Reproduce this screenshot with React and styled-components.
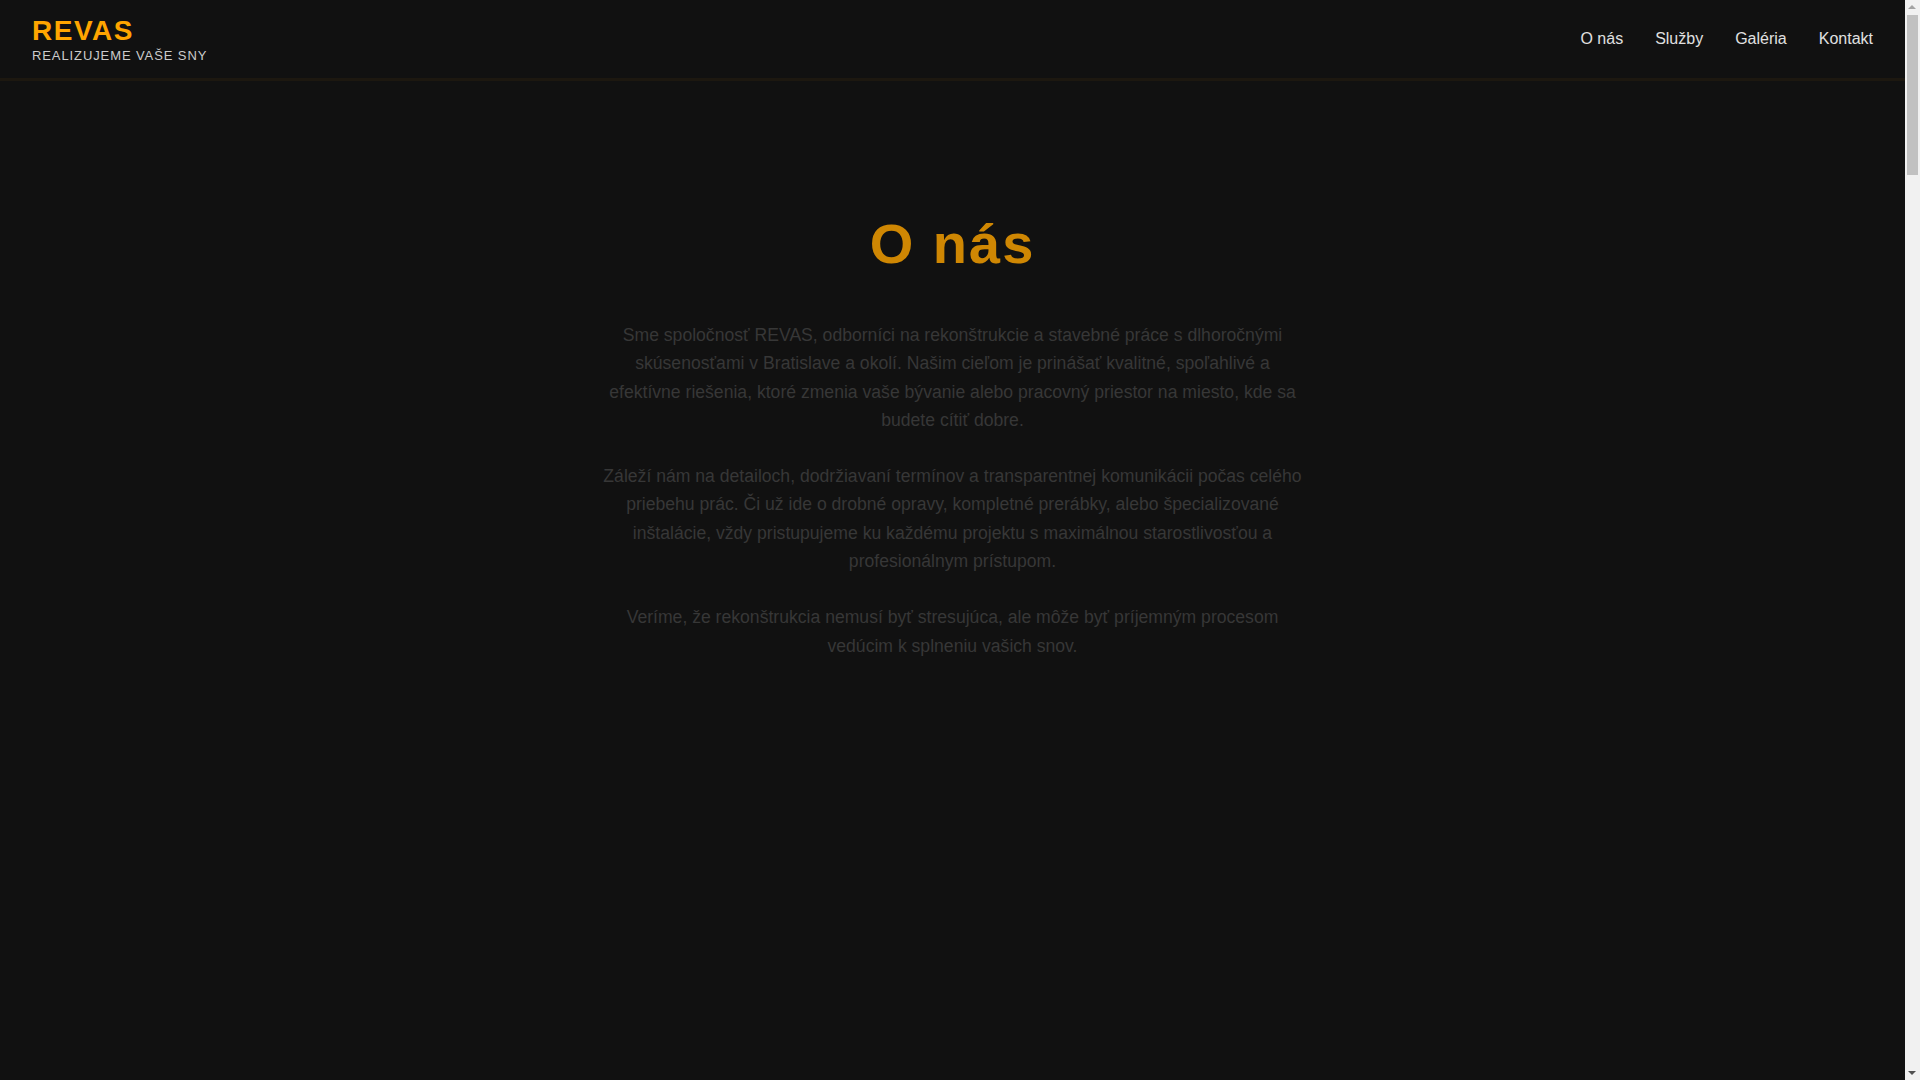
import React from 'react';
import styled, { createGlobalStyle } from 'styled-components';

const GlobalStyle = createGlobalStyle`
  html, body {
    margin: 0;
    padding: 0;
    background: #111111;
    color: #e0e0e0;
    font-family: "Liberation Sans", Arial, sans-serif;
  }
  * { box-sizing: border-box; }
`;

const Page = styled.div`
  margin-right: 15px;
`;

// classic browser scrollbar, drawn over the right edge
const ScrollTrack = styled.div`
  position: fixed;
  top: 0;
  right: 0;
  width: 15px;
  height: 100vh;
  background: #f1f1f1;
`;

const ScrollThumb = styled.div`
  position: absolute;
  top: 15px;
  left: 2px;
  width: 11px;
  height: 160px;
  background: #c1c1c1;
`;

const ScrollArrow = styled.div`
  position: absolute;
  left: 3px;
  width: 0;
  height: 0;
  border-left: 4.5px solid transparent;
  border-right: 4.5px solid transparent;
  ${({ $down }) =>
    $down
      ? 'bottom: 5px; border-top: 4px solid #505050;'
      : 'top: 5px; border-bottom: 4px solid #a3a3a3;'}
`;

const Header = styled.header`
  display: flex;
  justify-content: space-between;
  align-items: center;
  height: 81px;
  padding: 0 32px;
  background: #111111;
  border-bottom: 3px solid rgba(255, 165, 0, 0.05);
`;

const Brand = styled.div`
  display: flex;
  flex-direction: column;
`;

const Logo = styled.h1`
  margin: 0;
  font-size: 28px;
  line-height: 32px;
  font-weight: 700;
  letter-spacing: 1.5px;
  color: #ffa500;
`;

const Tagline = styled.span`
  font-size: 13px;
  line-height: 17px;
  letter-spacing: 0.9px;
  color: #cccccc;
`;

const Nav = styled.nav`
  display: flex;
  gap: 32px;
`;

const NavLink = styled.a`
  font-size: 16px;
  color: #e0e0e0;
  text-decoration: none;
`;

const Section = styled.section`
  display: flex;
  flex-direction: column;
  align-items: center;
  min-height: ${({ $tall }) => ($tall ? '1000px' : '1500px')};
  padding: 129px 20px 80px;
  opacity: ${({ $hidden }) => ($hidden ? 0 : 1)};
`;

const Title = styled.h2`
  margin: 0 0 44px;
  font-size: 56px;
  line-height: 67px;
  font-weight: 700;
  letter-spacing: 2px;
  color: #cf8703;
`;

const Text = styled.div`
  max-width: 700px;
  text-align: center;
`;

const Paragraph = styled.p`
  margin: 0 0 28px;
  font-size: 17.6px;
  line-height: 28.3px;
  color: #373737;
`;

const links = ['O nás', 'Služby', 'Galéria', 'Kontakt'];

const App = () => {
  return (
    <>
      <GlobalStyle />
      <Page>
        <Header>
          <Brand>
            <Logo>REVAS</Logo>
            <Tagline>REALIZUJEME VAŠE SNY</Tagline>
          </Brand>
          <Nav>
            {links.map((l) => (
              <NavLink key={l} href="#">{l}</NavLink>
            ))}
          </Nav>
        </Header>

        <Section $tall>
          <Title>O nás</Title>
          <Text>
            <Paragraph>
              Sme spoločnosť REVAS, odborníci na rekonštrukcie a stavebné práce s dlhoročnými
              skúsenosťami v Bratislave a okolí. Našim cieľom je prinášať kvalitné, spoľahlivé a
              efektívne riešenia, ktoré zmenia vaše bývanie alebo pracovný priestor na miesto, kde sa
              budete cítiť dobre.
            </Paragraph>
            <Paragraph>
              Záleží nám na detailoch, dodržiavaní termínov a transparentnej komunikácii počas celého
              priebehu prác. Či už ide o drobné opravy, kompletné prerábky, alebo špecializované
              inštalácie, vždy pristupujeme ku každému projektu s maximálnou starostlivosťou a
              profesionálnym prístupom.
            </Paragraph>
            <Paragraph>
              Veríme, že rekonštrukcia nemusí byť stresujúca, ale môže byť príjemným procesom
              vedúcim k splneniu vašich snov.
            </Paragraph>
          </Text>
        </Section>

        <Section $hidden>
          <Title>Služby</Title>
        </Section>
        <Section $hidden>
          <Title>Galéria</Title>
        </Section>
        <Section $hidden>
          <Title>Kontakt</Title>
        </Section>
      </Page>
      <ScrollTrack>
        <ScrollArrow />
        <ScrollThumb />
        <ScrollArrow $down />
      </ScrollTrack>
    </>
  );
};

export default App;
